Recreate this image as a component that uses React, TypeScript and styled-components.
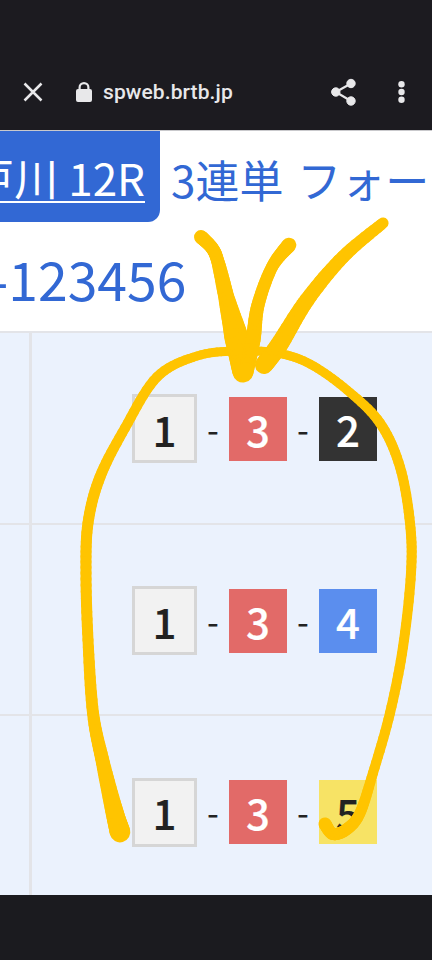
import styled, { createGlobalStyle } from 'styled-components';

const GlobalStyle = createGlobalStyle`
  html, body {
    margin: 0;
    padding: 0;
    background: #1c1b20;
  }
  body {
    font-family: "Noto Sans CJK JP", "Noto Sans", sans-serif;
  }
`;

const Screen = styled.div`
  position: relative;
  width: 432px;
  height: 960px;
  overflow: hidden;
  display: flex;
  flex-direction: column;
  background: #1c1b20;
`;

const StatusArea = styled.div`
  height: 60px;
`;

const Toolbar = styled.div`
  height: 70px;
  padding: 0 27px 6px 21px;
  box-sizing: border-box;
  display: flex;
  align-items: center;
  color: #e8e8ea;
`;

const UrlText = styled.span`
  margin-left: 11px;
  flex: 1;
  font-family: Roboto, sans-serif;
  font-size: 21px;
  font-weight: 500;
  letter-spacing: 0.1px;
`;

const ShareButton = styled.span`
  display: flex;
  margin-right: 42px;
`;

const LockIcon = styled.svg`
  margin-left: 31px;
`;

const Page = styled.div`
  flex: none;
  height: 765px;
  background: #fff;
  border-top: 1px solid #c9c9cc;
  box-sizing: border-box;
  overflow: hidden;
`;

const Heading = styled.div`
  height: 200px;
  margin-left: -40px;
  white-space: nowrap;
  color: #3268d4;
`;

const HeadingTop = styled.div`
  display: flex;
  align-items: center;
  gap: 11px;
  height: 91px;
  font-size: 44px;
  line-height: 1;
`;

const VenueTag = styled.span`
  flex: none;
  width: 200px;
  height: 91px;
  box-sizing: border-box;
  padding-right: 15px;
  display: flex;
  align-items: center;
  justify-content: flex-end;
  background: #3268d4;
  border-radius: 0 0 12px 0;
  overflow: hidden;
`;

const VenueLink = styled.a`
  color: #fff;
  text-decoration: underline;
  text-decoration-thickness: 2px;
  text-underline-offset: 5px;
`;

const HeadingTitle = styled.span`
  padding-top: 4px;
  word-spacing: 4px;
`;

const TicketCode = styled.div`
  margin-top: 21px;
  font-size: 53.5px;
  line-height: 70px;
`;

const Table = styled.div`
  border-top: 2px solid #e3e4e8;
  display: grid;
  grid-template-columns: 32px 1fr;
  background: #ebf2fd;
`;

const SideCell = styled.div`
  border-right: 3px solid #e3e4e8;
  border-bottom: 2px solid #e3e4e8;
`;

const ResultCell = styled.div`
  height: 187.7px;
  padding: 2px 55px 0 0;
  border-bottom: 2px solid #e3e4e8;
  display: flex;
  align-items: center;
  justify-content: flex-end;
`;

const Dash = styled.span`
  width: 32px;
  text-align: center;
  font-size: 34px;
  line-height: 1;
  color: #222;
`;

const Tile = styled.span<{ $bg: string; $fg: string; $w: number; $outlined?: boolean }>`
  width: ${(p) => p.$w}px;
  height: ${(p) => (p.$outlined ? 69 : 64)}px;
  box-sizing: border-box;
  display: flex;
  align-items: center;
  justify-content: center;
  border: ${(p) => (p.$outlined ? '3px solid #d6d6d6' : 'none')};
  background: ${(p) => p.$bg};
  color: ${(p) => p.$fg};
  font-size: 42px;
  font-weight: 500;
  line-height: 1;
  -webkit-text-stroke: 0.2px ${(p) => p.$fg};
`;

const Footer = styled.div`
  flex: 1;
  background: #1b1b1f;
`;

const Scribble = styled.svg`
  position: absolute;
  left: 0;
  top: 0;
  pointer-events: none;
`;

const lanes: Record<number, { bg: string; fg: string }> = {
  2: { bg: '#333333', fg: '#ffffff' },
  3: { bg: '#e26a68', fg: '#ffffff' },
  4: { bg: '#5b8eee', fg: '#ffffff' },
  5: { bg: '#f7e365', fg: '#222222' },
};

const results = [
  [1, 3, 2],
  [1, 3, 4],
  [1, 3, 5],
];

type Pt = [number, number, number];

// hand drawn marker lines: [x, y, width] along the stroke
const loop: Pt[] = [
  [120, 832, 21], [114, 810, 18], [103, 763, 14], [93, 713, 12], [88, 640, 11], [86, 573, 11],
  [88, 523, 11], [100, 477, 11], [125, 428, 10], [157, 377, 10], [197, 356, 9], [237, 351, 9],
  [277, 353, 9], [310, 364, 9], [347, 390, 9], [380, 423, 10], [400, 467, 10], [410, 523, 10],
  [411, 573, 10], [403, 647, 10], [390, 713, 10], [373, 773, 10], [360, 813, 11], [347, 829, 12],
  [333, 834, 12], [325, 824, 13],
];
const strokeA: Pt[] = [
  [201, 237, 14], [212, 248, 13], [218, 262, 13], [227, 300, 16], [237, 340, 24], [243, 372, 21],
];
const strokeB: Pt[] = [
  [289, 245, 15], [272, 267, 12], [258, 305, 13], [253, 340, 15], [246, 372, 15],
];
const strokeC: Pt[] = [
  [383, 223, 11], [343, 257, 13], [307, 300, 15], [279, 345, 18], [264, 365, 18],
];

// smooths the points and cuts them into short round-capped lines so the width can vary
function Marker({ points }: { points: Pt[] }) {
  const samples: Pt[] = [];
  for (let i = 0; i < points.length - 1; i++) {
    const p0 = points[Math.max(i - 1, 0)];
    const p1 = points[i];
    const p2 = points[i + 1];
    const p3 = points[Math.min(i + 2, points.length - 1)];
    for (let s = 0; s < 10; s++) {
      const t = s / 10;
      const at = (k: number) =>
        0.5 *
        (2 * p1[k] +
          (p2[k] - p0[k]) * t +
          (2 * p0[k] - 5 * p1[k] + 4 * p2[k] - p3[k]) * t * t +
          (3 * p1[k] - p0[k] - 3 * p2[k] + p3[k]) * t * t * t);
      samples.push([at(0), at(1), p1[2] + (p2[2] - p1[2]) * t]);
    }
  }
  samples.push(points[points.length - 1]);
  return (
    <>
      {samples.slice(1).map((s, i) => (
        <line
          key={i}
          x1={samples[i][0]}
          y1={samples[i][1]}
          x2={s[0]}
          y2={s[1]}
          strokeWidth={s[2]}
          strokeLinecap="round"
        />
      ))}
    </>
  );
}

function ResultRow({ combo }: { combo: number[] }) {
  const [first, second, third] = combo;
  return (
    <>
      <SideCell />
      <ResultCell>
        <Tile $bg="#f2f2f2" $fg="#222222" $w={65} $outlined>
          {first}
        </Tile>
        <Dash>-</Dash>
        <Tile $bg={lanes[second].bg} $fg={lanes[second].fg} $w={58}>
          {second}
        </Tile>
        <Dash>-</Dash>
        <Tile $bg={lanes[third].bg} $fg={lanes[third].fg} $w={58}>
          {third}
        </Tile>
      </ResultCell>
    </>
  );
}

export default function App() {
  return (
    <>
      <GlobalStyle />
      <Screen>
        <StatusArea />
        <Toolbar>
          <svg width="24" height="24" viewBox="0 0 24 24" fill="none" stroke="currentColor" strokeWidth="2.5">
            <path d="M3.5 3.5 20.5 20.5M20.5 3.5 3.5 20.5" />
          </svg>
          <LockIcon width="16" height="20" viewBox="0 0 16 20" fill="currentColor">
            <path d="M2.5 7V5.5a5.5 5.5 0 0 1 11 0V7H14a2 2 0 0 1 2 2v9a2 2 0 0 1-2 2H2a2 2 0 0 1-2-2V9a2 2 0 0 1 2-2h.5Zm2.2 0h6.6V5.5a3.3 3.3 0 0 0-6.6 0V7Z" />
          </LockIcon>
          <UrlText>spweb.brtb.jp</UrlText>
          <ShareButton>
            <svg width="25" height="28" viewBox="0 0 25 28" fill="currentColor" stroke="currentColor">
              <circle cx="20" cy="5.5" r="4.2" />
              <circle cx="4.8" cy="14" r="4.2" />
              <circle cx="20" cy="23" r="4.2" />
              <path d="M20 5.5 4.8 14 20 23" fill="none" strokeWidth="2.2" />
            </svg>
          </ShareButton>
          <svg width="7" height="22" viewBox="0 0 7 22" fill="currentColor">
            <circle cx="3.5" cy="3.2" r="3.2" />
            <circle cx="3.5" cy="11" r="3.2" />
            <circle cx="3.5" cy="18.8" r="3.2" />
          </svg>
        </Toolbar>
        <Page>
          <Heading>
            <HeadingTop>
              <VenueTag>
                <VenueLink>江戸川 12R</VenueLink>
              </VenueTag>
              <HeadingTitle>3連単 フォーメーション</HeadingTitle>
            </HeadingTop>
            <TicketCode>1-123456</TicketCode>
          </Heading>
          <Table>
            {results.map((combo) => (
              <ResultRow key={combo.join('-')} combo={combo} />
            ))}
          </Table>
        </Page>
        <Footer />
        <Scribble width="432" height="960" viewBox="0 0 432 960" stroke="#ffc400" fill="none">
          <Marker points={loop} />
          <Marker points={strokeA} />
          <Marker points={strokeB} />
          <Marker points={strokeC} />
        </Scribble>
      </Screen>
    </>
  );
}
